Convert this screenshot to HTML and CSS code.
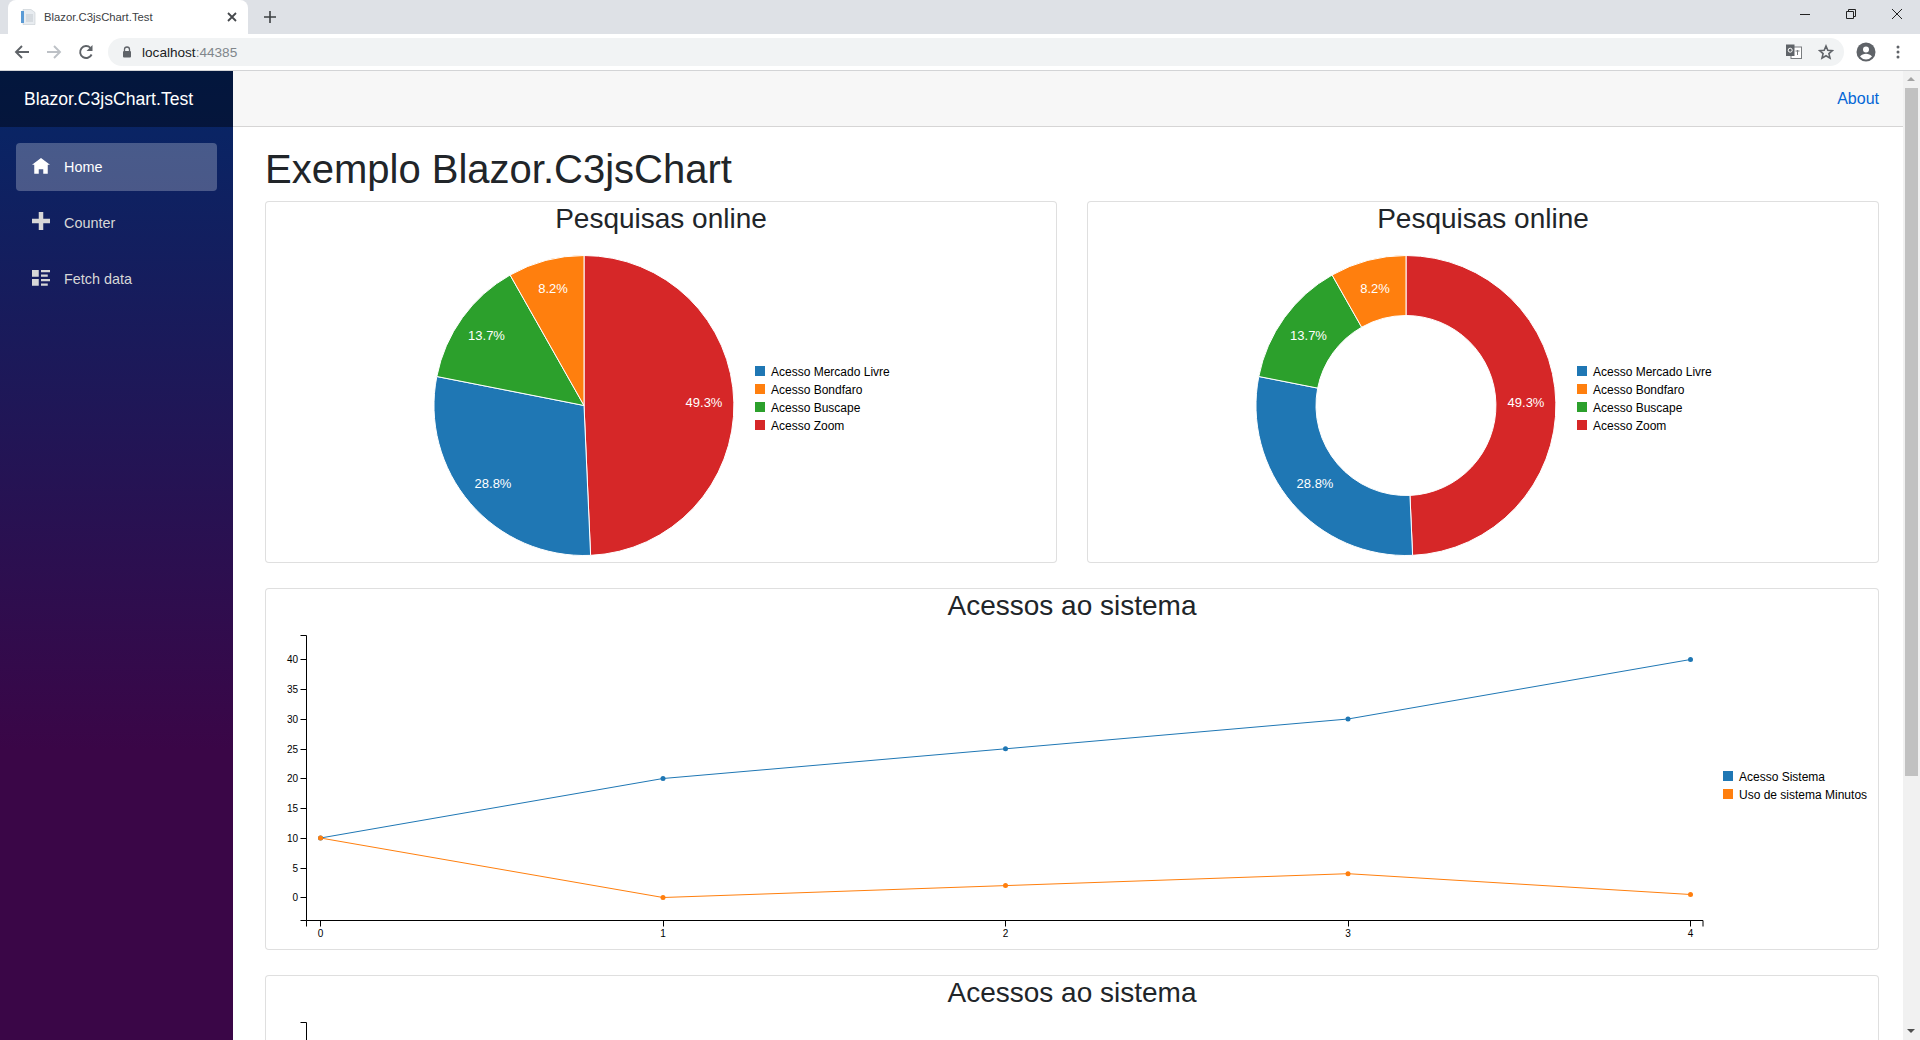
FILE: index.html
```html
<!DOCTYPE html>
<html lang="en">
<head>
  <meta charset="UTF-8" />
  <title>Blazor.C3jsChart.Test</title>
  <link rel="stylesheet" href="styles.css">
</head>
<body>
  <div class="browser-tabs">
    <div class="tab">
      <svg class="favicon" width="16" height="16" viewBox="0 0 16 16">
        <path d="M3 0.500h8l4 3v12H3z" fill="#e8ecf0" stroke="#c6ccd2" stroke-width="0.6"/>
        <rect x="1" y="2" width="3" height="12" fill="#5b9bd5"/>
        <path d="M6 6h7M6 8h7M6 10h7M6 12h7" stroke="#c3c9cf"/>
      </svg>
      <span class="tab-title">Blazor.C3jsChart.Test</span>
      <svg class="tab-close" width="10" height="10" viewBox="0 0 10 10">
        <path d="M1 1l8 8M9 1l-8 8" stroke="#45484c" stroke-width="1.8"/>
      </svg>
    </div>
    <svg class="new-tab" width="12" height="12" viewBox="0 0 12 12">
      <path d="M6 0v12M0 6h12" stroke="#3c4043" stroke-width="1.6"/>
    </svg>
    <div class="window-buttons">
      <svg width="12" height="12" viewBox="0 0 12 12"><path d="M1 6.500h10" stroke="#222" fill="none"/></svg>
      <svg width="12" height="12" viewBox="0 0 12 12"><path d="M1.500 3.500h7v7h-7zM3.500 3.500v-2h7v7h-2" stroke="#222" fill="none"/></svg>
      <svg width="12" height="12" viewBox="0 0 12 12"><path d="M1 1l10 10M11 1l-10 10" stroke="#222" fill="none"/></svg>
    </div>
  </div>

  <div class="browser-toolbar">
    <svg class="tool-icon" width="16" height="16" viewBox="0 0 16 16">
      <path d="M15 8H2M8 2L2 8l6 6" stroke="#5f6368" stroke-width="1.9" fill="none"/>
    </svg>
    <svg class="tool-icon" width="16" height="16" viewBox="0 0 16 16">
      <path d="M1 8h13M8 2l6 6-6 6" stroke="#bdc1c6" stroke-width="1.9" fill="none"/>
    </svg>
    <svg class="tool-icon" width="16" height="16" viewBox="0 0 16 16">
      <path d="M13.600 10.500A6 6 0 1 1 12.400 3.800" stroke="#5f6368" stroke-width="1.9" fill="none"/>
      <path d="M14.500 1v6h-6z" fill="#5f6368"/>
    </svg>
    <div class="omnibox">
      <svg width="10" height="12" viewBox="0 0 10 12">
        <path d="M2.500 5V3.500a2.500 2.500 0 0 1 5 0V5" stroke="#5f6368" stroke-width="1.300" fill="none"/>
        <rect x="1" y="5" width="8" height="6.500" rx="1" fill="#5f6368"/>
      </svg>
      <span class="url">localhost<span class="url-port">:44385</span></span>
      <svg class="translate" width="16" height="16" viewBox="0 0 16 16">
        <rect x="5" y="3" width="10.500" height="11.500" fill="#fff" stroke="#7a7d80"/>
        <path d="M0 .5h8.500V12H0z" fill="#5f6368"/>
        <circle cx="4.200" cy="6.200" r="2" stroke="#fff" fill="none"/>
        <path d="M9.500 7h4M11.500 6v5" stroke="#7a7d80"/>
      </svg>
      <svg class="star" width="16" height="16" viewBox="0 0 16 16">
        <path d="M8 2l1.800 4.200 4.600.4-3.500 3 1.100 4.500L8 11.700l-4 2.400 1.100-4.500-3.500-3 4.600-.4z" stroke="#5f6368" stroke-width="1.600" fill="none"/>
      </svg>
    </div>
    <svg class="avatar" width="20" height="20" viewBox="0 0 20 20">
      <circle cx="10" cy="10" r="9.500" fill="#5f6368"/>
      <circle cx="10" cy="7.600" r="3" fill="#fff"/>
      <path d="M4 14.600c1.500-2 3.700-2.900 6-2.900s4.500.9 6 2.900a7.700 7.700 0 0 1-12 0z" fill="#fff"/>
    </svg>
    <svg class="menu-dots" width="4" height="14" viewBox="0 0 4 14">
      <circle cx="2" cy="2" r="1.500" fill="#5f6368"/>
      <circle cx="2" cy="7" r="1.500" fill="#5f6368"/>
      <circle cx="2" cy="12" r="1.500" fill="#5f6368"/>
    </svg>
  </div>

  <div class="app">
    <div class="sidebar">
      <div class="brand">Blazor.C3jsChart.Test</div>
      <nav class="nav">
        <a class="nav-link active">
          <svg class="nav-icon" viewBox="0 0 8 8"><path d="M4 0l-4 3h1v4h2v-2h2v2h2v-4.030l1 .03-4-3z"/></svg>
          Home
        </a>
        <a class="nav-link">
          <svg class="nav-icon icon-plus" viewBox="0 0 8 8"><path d="M3 0v3h-3v2h3v3h2v-3h3v-2h-3v-3h-2z"/></svg>
          Counter
        </a>
        <a class="nav-link">
          <svg class="nav-icon" viewBox="0 0 8 8"><path d="M0 0v3h3v-3h-3zm4 0v1h4v-1h-4zm0 2v1h3v-1h-3zm-4 2v3h3v-3h-3zm4 0v1h4v-1h-4zm0 2v1h3v-1h-3z"/></svg>
          Fetch data
        </a>
      </nav>
    </div>

    <div class="main">
      <div class="top-row"><a class="about">About</a></div>
      <div class="content">
        <h1>Exemplo Blazor.C3jsChart</h1>
        <div class="chart-row">
          <div class="card">
            <h3>Pesquisas online</h3>
            <svg class="chart" width="790" height="326" viewBox="0 0 790 326">
              <g transform="translate(318 169.5)" stroke="#fff">
                <path d="M0-150A150 150 0 0 1 6.600 149.850L0 0z" fill="#d62728"/>
                <path d="M6.600 149.850A150 150 0 0 1-147.200-29L0 0z" fill="#1f77b4"/>
                <path d="M-147.200-29A150 150 0 0 1-73.900-130.500L0 0z" fill="#2ca02c"/>
                <path d="M-73.900-130.500A150 150 0 0 1 0-150L0 0z" fill="#ff7f0e"/>
              </g>
              <g class="pie-label" transform="translate(318 169.500)">
                <text x="120" y="1">49.3%</text>
                <text x="-91" y="82">28.8%</text>
                <text x="-97.500" y="-66">13.7%</text>
                <text x="-31" y="-112.500">8.2%</text>
              </g>
              <g class="legend">
                <rect x="489" y="130" width="10" height="10" fill="#1f77b4"/><text x="505" y="140">Acesso Mercado Livre</text>
                <rect x="489" y="148" width="10" height="10" fill="#ff7f0e"/><text x="505" y="158">Acesso Bondfaro</text>
                <rect x="489" y="166" width="10" height="10" fill="#2ca02c"/><text x="505" y="176">Acesso Buscape</text>
                <rect x="489" y="184" width="10" height="10" fill="#d62728"/><text x="505" y="194">Acesso Zoom</text>
              </g>
            </svg>
          </div>
          <div class="card">
            <h3>Pesquisas online</h3>
            <svg class="chart" width="790" height="326" viewBox="0 0 790 326">
              <g transform="translate(318 169.5)" stroke="#fff">
                <path d="M0-150A150 150 0 0 1 6.600 149.850L3.960 89.910A90 90 0 0 0 0-90z" fill="#d62728"/>
                <path d="M6.600 149.850A150 150 0 0 1-147.200-29L-88.320-17.400A90 90 0 0 0 3.960 89.910z" fill="#1f77b4"/>
                <path d="M-147.200-29A150 150 0 0 1-73.900-130.500L-44.340-78.300A90 90 0 0 0-88.320-17.400z" fill="#2ca02c"/>
                <path d="M-73.900-130.500A150 150 0 0 1 0-150V-90A90 90 0 0 0-44.340-78.300z" fill="#ff7f0e"/>
              </g>
              <g class="pie-label" transform="translate(318 169.500)">
                <text x="120" y="1">49.3%</text>
                <text x="-91" y="82">28.8%</text>
                <text x="-97.500" y="-66">13.7%</text>
                <text x="-31" y="-112.500">8.2%</text>
              </g>
              <g class="legend">
                <rect x="489" y="130" width="10" height="10" fill="#1f77b4"/><text x="505" y="140">Acesso Mercado Livre</text>
                <rect x="489" y="148" width="10" height="10" fill="#ff7f0e"/><text x="505" y="158">Acesso Bondfaro</text>
                <rect x="489" y="166" width="10" height="10" fill="#2ca02c"/><text x="505" y="176">Acesso Buscape</text>
                <rect x="489" y="184" width="10" height="10" fill="#d62728"/><text x="505" y="194">Acesso Zoom</text>
              </g>
            </svg>
          </div>
        </div>

        <div class="card">
          <h3>Acessos ao sistema</h3>
          <svg class="chart" width="1612" height="326" viewBox="0 0 1612 326">
            <g class="axis">
              <path d="M34.500 12.500h6v285h-6M40.500 297.500h1396.500v6M40.500 297.500v6"/>
              <path d="M34.500 36.500h6M34.500 66.500h6M34.500 96.500h6M34.500 126.500h6M34.500 155.500h6M34.500 185.500h6M34.500 215.500h6M34.500 245.500h6M34.500 274.500h6"/>
              <path d="M54.500 297.500v6M397.500 297.500v6M739.500 297.500v6M1082.500 297.500v6M1424.500 297.500v6"/>
            </g>
            <g class="tick-y">
              <text x="32" y="40">40</text>
              <text x="32" y="70">35</text>
              <text x="32" y="100">30</text>
              <text x="32" y="130">25</text>
              <text x="32" y="159">20</text>
              <text x="32" y="189">15</text>
              <text x="32" y="219">10</text>
              <text x="32" y="249">5</text>
              <text x="32" y="278">0</text>
            </g>
            <g class="tick-x">
              <text x="54.500" y="314">0</text>
              <text x="397" y="314">1</text>
              <text x="739.500" y="314">2</text>
              <text x="1082" y="314">3</text>
              <text x="1424.500" y="314">4</text>
            </g>
            <polyline class="line" stroke="#1f77b4" points="54.500,215 397,155.500 739.500,125.800 1082,96 1424.500,36.500"/>
            <polyline class="line" stroke="#ff7f0e" points="54.500,215 397,274.500 739.500,262.600 1082,250.700 1424.500,271.500"/>
            <g fill="#1f77b4">
              <circle cx="54.500" cy="215" r="2.500"/><circle cx="397" cy="155.500" r="2.500"/><circle cx="739.500" cy="125.800" r="2.500"/><circle cx="1082" cy="96" r="2.500"/><circle cx="1424.500" cy="36.500" r="2.500"/>
            </g>
            <g fill="#ff7f0e">
              <circle cx="54.500" cy="215" r="2.500"/><circle cx="397" cy="274.500" r="2.500"/><circle cx="739.500" cy="262.600" r="2.500"/><circle cx="1082" cy="250.700" r="2.500"/><circle cx="1424.500" cy="271.500" r="2.500"/>
            </g>
            <g class="legend">
              <rect x="1457" y="148" width="10" height="10" fill="#1f77b4"/><text x="1473" y="158">Acesso Sistema</text>
              <rect x="1457" y="166" width="10" height="10" fill="#ff7f0e"/><text x="1473" y="176">Uso de sistema Minutos</text>
            </g>
          </svg>
        </div>

        <div class="card">
          <h3>Acessos ao sistema</h3>
          <svg class="chart" width="1612" height="326" viewBox="0 0 1612 326">
            <g class="axis"><path d="M34.500 12.500h6v285"/></g>
          </svg>
        </div>
      </div>
    </div>

    <div class="scrollbar">
      <span class="scroll-up"></span>
      <div class="scroll-thumb"></div>
      <span class="scroll-down"></span>
    </div>
  </div>
</body>
</html>
```

FILE: styles.css
```css
* {
  box-sizing: border-box;
}
html, body {
  height: 100%;
}
body {
  margin: 0;
  height: 1040px;
  overflow: hidden;
  display: flex;
  flex-direction: column;
  font-family: "Liberation Sans", Arial, sans-serif;
  color: #212529;
  background-color: #fff;
}

/* browser chrome */
.browser-tabs {
  height: 34px;
  flex: none;
  display: flex;
  align-items: center;
  background-color: #dee1e6;
}
.tab {
  width: 240px;
  height: 34px;
  margin-left: 8px;
  padding: 0 11px 0 12px;
  display: flex;
  align-items: center;
  background-color: #fff;
  border-radius: 8px 8px 0 0;
}
.tab-title {
  flex: 1;
  margin-left: 8px;
  font-size: 11.3px;
  color: #3c4043;
}
.new-tab {
  margin-left: 16px;
}
.window-buttons {
  align-self: flex-start;
  margin: 8px 17px 0 auto;
  display: flex;
  gap: 34px;
}
.browser-toolbar {
  height: 37px;
  flex: none;
  display: flex;
  align-items: center;
  padding-left: 14px;
  background-color: #fff;
  border-bottom: 1px solid #d3d4d6;
}
.tool-icon {
  margin-right: 16px;
}
.omnibox {
  width: 1736px;
  height: 28px;
  margin-left: -2px;
  padding: 0 10px 0 14px;
  display: flex;
  align-items: center;
  background-color: #f1f3f4;
  border-radius: 14px;
}
.url {
  flex: 1;
  margin-left: 10px;
  font-size: 13.6px;
  color: #202124;
}
.url-port {
  color: #80868b;
}
.translate {
  margin-right: 16px;
}
.avatar {
  margin-left: 12px;
}
.menu-dots {
  margin-left: 20px;
}

/* app */
.app {
  flex: 1;
  min-height: 0;
  display: flex;
}
.sidebar {
  width: 233px;
  flex: none;
  background-image: linear-gradient(180deg, #052767 0%, #3a0647 70%);
}
.brand {
  height: 56px;
  padding-left: 24px;
  display: flex;
  align-items: center;
  font-size: 17.6px;
  color: #fff;
  background-color: rgba(0, 0, 0, 0.4);
}
.nav {
  padding: 16px 16px 0;
}
.nav-link {
  height: 48px;
  margin-bottom: 8px;
  padding-left: 16px;
  display: flex;
  align-items: center;
  font-size: 14.4px;
  color: #d7d7d7;
  border-radius: 4px;
}
.nav-link.active {
  color: #fff;
  background-color: rgba(255, 255, 255, 0.25);
}
.nav-icon {
  width: 18px;
  height: 18px;
  margin-right: 14px;
  fill: currentColor;
}
.icon-plus {
  margin-top: -4px;
}
.main {
  flex: 1;
  min-width: 0;
  overflow: hidden;
}
.top-row {
  height: 56px;
  padding-right: 24px;
  display: flex;
  align-items: center;
  justify-content: flex-end;
  background-color: #f7f7f7;
  border-bottom: 1px solid #d6d5d5;
}
.about {
  font-size: 16px;
  color: #0366d6;
}
.content {
  padding: 18px 24px 0 32px;
}
h1 {
  margin: 0 0 8px;
  font-size: 40px;
  font-weight: 400;
  line-height: 48px;
}
h3 {
  margin: 0;
  height: 34px;
  font-size: 28px;
  font-weight: 400;
  line-height: 34px;
  text-align: center;
}
.chart-row {
  display: grid;
  grid-template-columns: 1fr 1fr;
  gap: 30px;
}
.card {
  margin-bottom: 25px;
  background-color: #fff;
  border: 1px solid rgba(0, 0, 0, 0.125);
  border-radius: 4px;
}
.chart {
  display: block;
}
.pie-label text {
  font-size: 13px;
  fill: #fff;
  text-anchor: middle;
}
.legend text {
  font-size: 12px;
  fill: #000;
}
.axis path {
  fill: none;
  stroke: #000;
}
.tick-y text, .tick-x text {
  font-size: 10px;
  fill: #000;
}
.tick-y text {
  text-anchor: end;
}
.tick-x text {
  text-anchor: middle;
}
.line {
  fill: none;
  stroke-width: 1;
}

/* page scrollbar */
.scrollbar {
  width: 17px;
  flex: none;
  position: relative;
  background-color: #f1f1f1;
}
.scroll-thumb {
  height: 688px;
  margin: 17px 2px 0;
  background-color: #c1c1c1;
}
.scroll-up, .scroll-down {
  position: absolute;
  left: 4px;
  border-left: 4px solid transparent;
  border-right: 4px solid transparent;
}
.scroll-up {
  top: 6px;
  border-bottom: 4px solid #a3a3a3;
}
.scroll-down {
  bottom: 7px;
  border-top: 4px solid #505050;
}
```
